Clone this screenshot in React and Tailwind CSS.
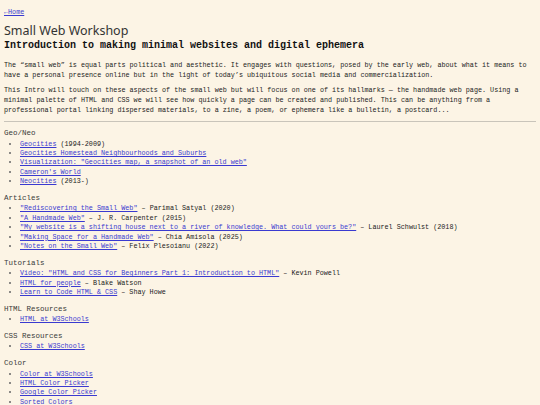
import React from "react";

const mono = {
  fontFamily:
    '"Courier New", "Nimbus Mono PS", "Nimbus Mono L", FreeMono, Courier, "Liberation Mono", monospace',
};

function A({ children }) {
  return (
    <a href="#" className="text-[#3a3ad0] underline underline-offset-[1px]">
      {children}
    </a>
  );
}

function Section({ title, items }) {
  return (
    <div>
      <h3 className="text-[7.5px] leading-[10px] text-[#3a3a3a]">{title}</h3>
      <ul className="mt-[1.5px] list-disc pl-[16px] text-[6.75px] leading-[9.4px] marker:text-[#666]">
        {items.map((it, i) => (
          <li key={i}>
            <A>{it[0]}</A>
            {it[1] ? <span>{it[1]}</span> : null}
          </li>
        ))}
      </ul>
    </div>
  );
}

export default function App() {
  const sections = [
    {
      title: "Geo/Neo",
      items: [
        ["Geocities", " (1994-2009)"],
        ["Geocities Homestead Neighbourhoods and Suburbs"],
        ['Visualization: "Geocities map, a snapshot of an old web"'],
        ["Cameron's World"],
        ["Neocities", " (2013-)"],
      ],
    },
    {
      title: "Articles",
      items: [
        ['"Rediscovering the Small Web"', " – Parimal Satyal (2020)"],
        ['"A Handmade Web"', " – J. R. Carpenter (2015)"],
        [
          '"My website is a shifting house next to a river of knowledge. What could yours be?"',
          " – Laurel Schwulst (2018)",
        ],
        ['"Making Space for a Handmade Web"', " – Chia Amisola (2025)"],
        ['"Notes on the Small Web"', " – Felix Plesoianu (2022)"],
      ],
    },
    {
      title: "Tutorials",
      items: [
        ['Video: "HTML and CSS for Beginners Part 1: Introduction to HTML"', " – Kevin Powell"],
        ["HTML for people", " – Blake Watson"],
        ["Learn to Code HTML & CSS", " – Shay Howe"],
      ],
    },
    { title: "HTML Resources", items: [["HTML at W3Schools"]] },
    { title: "CSS Resources", items: [["CSS at W3Schools"]] },
    {
      title: "Color",
      items: [
        ["Color at W3Schools"],
        ["HTML Color Picker"],
        ["Google Color Picker"],
        ["Sorted Colors"],
      ],
    },
  ];

  return (
    <div
      className="min-h-[405px] w-[540px] overflow-hidden bg-[#fcf4e5] px-[4px] pt-[7px] text-[#222]"
      style={mono}
    >
      <div className="text-[6.75px] leading-[10px]">
        <A>←Home</A>
      </div>
      <h1
        className="mt-[7px] text-[12.5px] leading-[14px] text-[#333]"
        style={{ fontFamily: '"Noto Sans", "Open Sans", sans-serif' }}
      >
        Small Web Workshop
      </h1>
      <h2 className="mt-[2px] text-[10px] font-bold leading-[12px] text-[#111]">
        Introduction to making minimal websites and digital ephemera
      </h2>
      <p className="mt-[8px] text-[6.75px] leading-[10px]">
        The “small web” is equal parts political and aesthetic. It engages with questions, posed by
        the early web, about what it means to have a personal presence online but in the light of
        today’s ubiquitous social media and commercialization.
      </p>
      <p className="mt-[5px] text-[6.75px] leading-[10px]">
        This Intro will touch on these aspects of the small web but will focus on one of its
        hallmarks — the handmade web page. Using a minimal palette of HTML and CSS we will see how
        quickly a page can be created and published. This can be anything from a professional portal
        linking dispersed materials, to a zine, a poem, or ephemera like a bulletin, a postcard...
      </p>
      <hr className="mt-[6px] border-0 border-t border-[#c9c4ba]" />
      <div className="mt-[6px] flex flex-col gap-[6.3px]">
        {sections.map((s) => (
          <Section key={s.title} title={s.title} items={s.items} />
        ))}
      </div>
    </div>
  );
}
